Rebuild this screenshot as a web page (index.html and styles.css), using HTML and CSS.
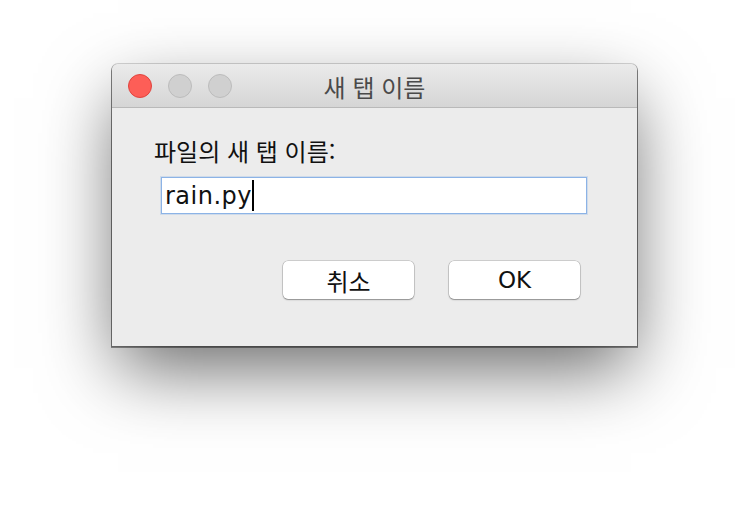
FILE: index.html
```html
<!DOCTYPE html>
<html lang="ko">
<head>
<meta charset="utf-8">
<link rel="stylesheet" href="styles.css">
</head>
<body>
<div class="window">
  <div class="titlebar">
    <div class="lights">
      <span class="light red"></span>
      <span class="light"></span>
      <span class="light"></span>
    </div>
    <div class="title">새 탭 이름</div>
  </div>
  <div class="content">
    <div class="label">파일의 새 탭 이름:</div>
    <div class="input"><span class="value">rain.py</span><span class="caret"></span></div>
    <div class="buttons">
      <div class="btn ko">취소</div>
      <div class="btn">OK</div>
    </div>
  </div>
</div>
</body>
</html>
```

FILE: styles.css
```css
html, body {
  margin: 0;
  padding: 0;
  background: #ffffff;
}
body {
  min-height: 506px;
  box-sizing: border-box;
  padding-top: 64px;
  font-family: "DejaVu Sans", "Noto Sans CJK KR", sans-serif;
  color: #000;
  overflow: hidden;
}
.window {
  margin-left: 112px;
  width: 525px;
  height: 282px;
  border-radius: 6px 6px 0 0;
  background: #ececec;
  box-shadow: 0 0 0 1px rgba(0,0,0,0.16), 0 1px 0 1px rgba(0,0,0,0.4), 0 28px 70px -6px rgba(0,0,0,0.6);
  display: flex;
  flex-direction: column;
}
.titlebar {
  height: 43px;
  border-bottom: 1px solid #b9b9b9;
  border-radius: 6px 6px 0 0;
  background: linear-gradient(#ebebeb, #d5d5d5);
  display: flex;
  align-items: center;
  position: relative;
}
.lights {
  display: flex;
  gap: 16px;
  padding-left: 16px;
}
.light {
  width: 22px;
  height: 22px;
  border-radius: 50%;
  background: #d0d0d0;
  border: 1px solid #bcbcbc;
}
.light.red {
  background: #fd5e57;
  border-color: #e0443e;
}
.title {
  position: absolute;
  left: 0;
  right: 0;
  top: 0;
  bottom: 0;
  display: flex;
  align-items: center;
  justify-content: center;
  font-family: "Noto Sans CJK KR", sans-serif;
  font-size: 24px;
  color: #4a4a4a;
  padding-top: 1px;
}
.content {
  padding: 29px 57px 0 42px;
  display: flex;
  flex-direction: column;
}
.label {
  font-family: "Noto Sans CJK KR", sans-serif;
  font-size: 24px;
  line-height: 28px;
  color: #111;
}
.input {
  margin-top: 12px;
  margin-left: 7px;
  width: 421px;
  height: 35px;
  background: #fff;
  border: 1px solid #8cb3e6;
  box-shadow: 0 0 0 1px rgba(140,179,230,0.3);
  display: flex;
  align-items: center;
  padding-left: 3px;
}
.value {
  font-size: 24px;
  letter-spacing: 0.5px;
  color: #111;
}
.caret {
  width: 2px;
  height: 31px;
  background: #000;
  margin-left: 0;
}
.buttons {
  margin-top: 47px;
  display: flex;
  justify-content: flex-end;
  gap: 35px;
}
.btn {
  width: 131px;
  height: 38px;
  background: #fff;
  border-radius: 5px;
  box-shadow: 0 0 0 0.5px rgba(0,0,0,0.25), 0 1px 1.5px rgba(0,0,0,0.3);
  display: flex;
  align-items: center;
  justify-content: center;
  font-size: 23px;
  color: #111;
}
.btn.ko {
  font-family: "Noto Sans CJK KR", sans-serif;
  font-size: 24px;
}
```
